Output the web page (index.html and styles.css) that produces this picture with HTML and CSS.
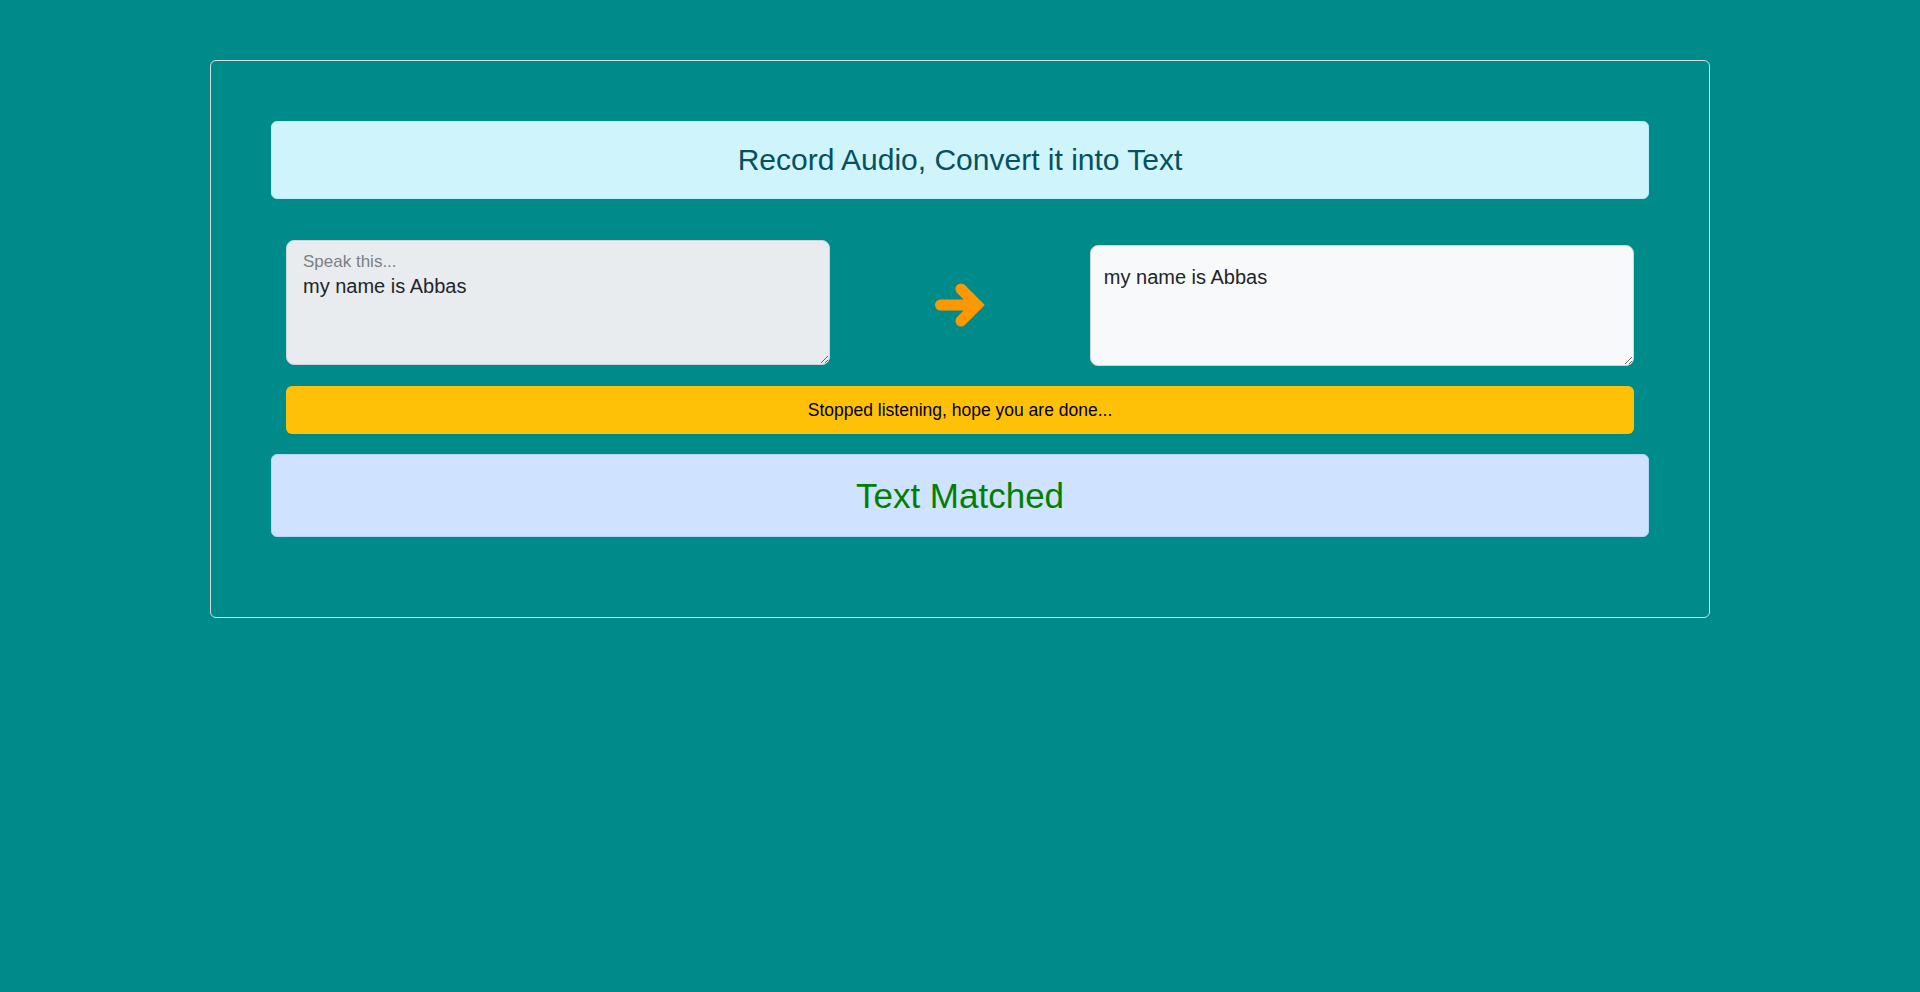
FILE: index.html
```html
<!DOCTYPE html>
<html lang="en">
<head>
<meta charset="utf-8">
<title>Record Audio, Convert it into Text</title>
<link rel="stylesheet" href="styles.css">
</head>
<body>
<main class="panel">
  <h1 class="title-alert">Record Audio, Convert it into Text</h1>
  <div class="io-row">
    <div class="col col-side">
      <div class="floating">
        <textarea class="speak-box" id="speak" readonly>my name is Abbas</textarea>
        <label class="floating-label" for="speak">Speak this...</label>
      </div>
    </div>
    <div class="col col-mid">
      <svg class="arrow" viewBox="0 0 50 44" width="50" height="44" aria-hidden="true">
        <path d="M5.5 22 H42 M26 6 L42 22 L26 38" fill="none" stroke="#ff9800" stroke-width="11" stroke-linecap="round" stroke-linejoin="miter"/>
      </svg>
    </div>
    <div class="col col-side">
      <textarea class="result-box">my name is Abbas</textarea>
    </div>
  </div>
  <div class="status-wrap">
    <div class="status">Stopped listening, hope you are done...</div>
  </div>
  <div class="match-alert">Text Matched</div>
</main>
</body>
</html>
```
FILE: styles.css
```css
* { box-sizing: border-box; }

html, body {
  margin: 0;
  padding: 0;
}

body {
  background: #008b8b;
  font-family: "Liberation Sans", Arial, sans-serif;
  color: #212529;
  min-height: 992px;
  padding-top: 60px;
}

.panel {
  width: 1500px;
  margin: 0 auto;
  border: 1px solid #dcdcdc;
  border-radius: 6px;
  padding: 60px;
}

.title-alert {
  margin: 0 0 41px 0;
  height: 78px;
  display: flex;
  align-items: center;
  justify-content: center;
  background: #cff4fc;
  border: 1px solid #b6effb;
  border-radius: 6px;
  color: #055160;
  font-size: 30px;
  font-weight: 400;
}

.io-row {
  display: flex;
}

.col {
  padding: 0 15px;
}

.col-side {
  flex: 0 0 41.6667%;
}

.col-mid {
  flex: 0 0 16.6667%;
  display: flex;
  align-items: center;
  justify-content: center;
  padding-top: 4px;
}

.arrow {
  display: block;
  overflow: visible;
}

.floating {
  position: relative;
}

textarea {
  display: block;
  width: 100%;
  margin: 0;
  font-family: "Liberation Sans", Arial, sans-serif;
  font-size: 20px;
  line-height: 30px;
  color: #212529;
  border-radius: 8px;
  outline: none;
}

.speak-box {
  height: 125px;
  background: #e9ecef;
  border: 1px solid #ced4da;
  padding: 30px 16px 8px 16px;
}

.floating-label {
  position: absolute;
  top: 12px;
  left: 17px;
  font-size: 17px;
  line-height: 20px;
  color: #7c8083;
  pointer-events: none;
}

.result-box {
  margin-top: 5px;
  height: 121px;
  background: #f8f9fa;
  border: 1px solid #ced4da;
  padding: 16px 13px 8px 13px;
}

.status-wrap {
  padding: 0 15px;
  margin-top: 20px;
}

.status {
  height: 48px;
  display: flex;
  align-items: center;
  justify-content: center;
  background: #ffc107;
  border-radius: 6px;
  color: #000;
  font-size: 17.5px;
}

.match-alert {
  margin-top: 20px;
  margin-bottom: 20px;
  height: 83px;
  display: flex;
  align-items: center;
  justify-content: center;
  background: #cfe2ff;
  border: 1px solid #b6d4fe;
  border-radius: 6px;
  color: #008000;
  font-size: 35px;
}
```
